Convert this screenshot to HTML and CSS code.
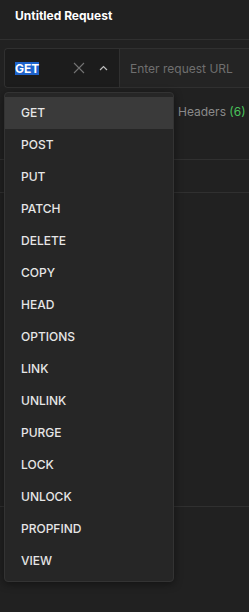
FILE: index.html
```html
<!DOCTYPE html>
<html lang="en">
<head>
  <meta charset="UTF-8" />
  <meta name="viewport" content="width=device-width, initial-scale=1.0"/>
  <title>Untitled Request</title>
  <link rel="stylesheet" href="styles.css">
</head>
<body>
  <header class="topbar">Untitled Request</header>

  <div class="request-bar">
    <div class="method-box">
      <span class="method-value">GET</span>
      <svg class="icon-clear" width="12" height="12" viewBox="0 0 12 12">
        <path d="M1 1 L11 11 M11 1 L1 11" stroke="#737373" stroke-width="1.1" fill="none"/>
      </svg>
      <svg class="icon-caret" width="9" height="6" viewBox="0 0 9 6">
        <path d="M1 5 L4.5 1.5 L8 5" stroke="#bdbdbd" stroke-width="1.2" fill="none"/>
      </svg>
    </div>
    <div class="url-box">Enter request URL</div>
  </div>

  <div class="tabs">
    <span class="tab">Headers <span class="count">(6)</span></span>
  </div>
  <div class="pane-row"></div>
  <div class="pane-body"></div>

  <ul class="method-menu">
    <li class="active">GET</li>
    <li>POST</li>
    <li>PUT</li>
    <li>PATCH</li>
    <li>DELETE</li>
    <li>COPY</li>
    <li>HEAD</li>
    <li>OPTIONS</li>
    <li>LINK</li>
    <li>UNLINK</li>
    <li>PURGE</li>
    <li>LOCK</li>
    <li>UNLOCK</li>
    <li>PROPFIND</li>
    <li>VIEW</li>
  </ul>
</body>
</html>
```

FILE: styles.css
```css
:root {
  --fundo: #212121;
  --borda: #303030;
  --menu: #262626;
  --ativo: #3a3a3a;
  --texto: #e6e6e6;
  --apagado: #8a8a8a;
}

* {
  box-sizing: border-box;
}

body {
  margin: 0;
  font-family: Inter, 'Noto Sans', sans-serif;
  background-color: var(--fundo);
  color: var(--texto);
  height: 612px;
  overflow: hidden;
  position: relative;
}

.topbar {
  height: 40px;
  padding: 8px 15px 0;
  font-size: 12px;
  font-weight: 700;
  color: #fff;
  border-bottom: 1px solid var(--borda);
}

.request-bar {
  display: flex;
  height: 40px;
  margin: 8px 0 0 4px;
  border: 1px solid var(--borda);
  border-right: none;
  border-radius: 4px 0 0 4px;
}

.method-box {
  width: 115px;
  display: flex;
  align-items: center;
  padding: 0 10px;
  background-color: #1c1c1c;
  border-right: 1px solid var(--borda);
  border-radius: 4px 0 0 4px;
}

.method-value {
  font-size: 12px;
  font-weight: 700;
  color: #fff;
  background-color: #1e63cc;
  line-height: 13px;
}

.icon-clear {
  margin-left: auto;
}

.icon-caret {
  margin-left: 14px;
  margin-right: 1px;
}

.url-box {
  flex: 1;
  display: flex;
  align-items: center;
  padding-left: 10px;
  font-size: 12px;
  color: #6f6f6f;
  background-color: #242424;
}

.tabs {
  height: 72px;
  padding: 16px 0 0 178px;
  font-size: 12px;
  border-bottom: 1px solid var(--borda);
}

.tab {
  color: var(--apagado);
}

.count {
  color: #49c15a;
}

.pane-row {
  height: 33px;
  border-bottom: 1px solid var(--borda);
}

.pane-body {
  height: 314px;
  border-bottom: 1px solid var(--borda);
}

.method-menu {
  position: absolute;
  top: 92px;
  left: 4px;
  width: 170px;
  margin: 0;
  padding: 4px 0;
  list-style: none;
  background-color: var(--menu);
  border: 1px solid #333;
  border-radius: 4px;
  box-shadow: 0 2px 8px rgba(0, 0, 0, 0.45);
}

.method-menu li {
  height: 32px;
  line-height: 32px;
  padding-left: 16px;
  font-size: 12px;
  font-weight: 500;
  color: var(--texto);
}

.method-menu li.active {
  background-color: var(--ativo);
}
```
